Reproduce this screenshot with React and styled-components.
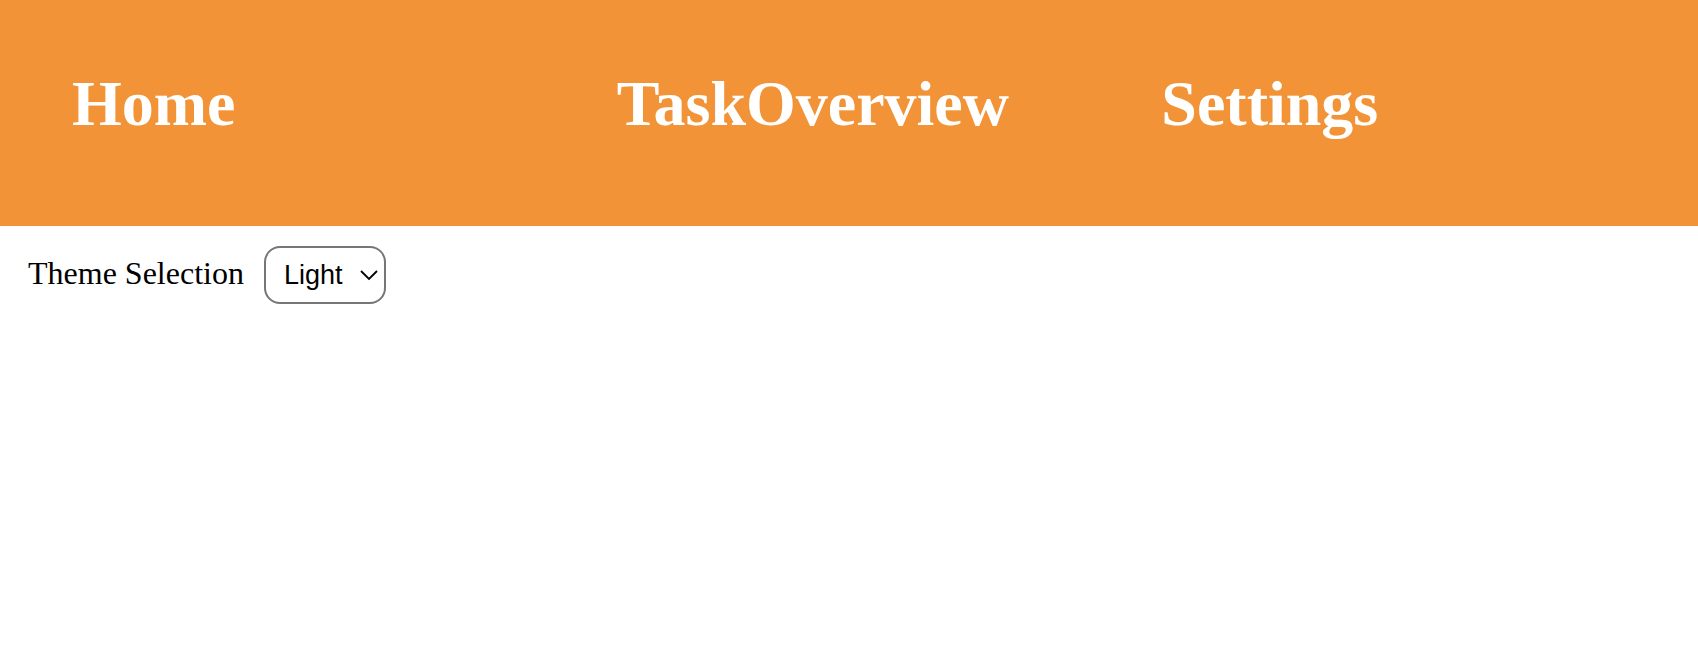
import React, { useState } from "react";
import styled, { createGlobalStyle } from "styled-components";

const GlobalStyle = createGlobalStyle`
  *, *::before, *::after { box-sizing: border-box; }
  body {
    margin: 0;
    background: #fff;
    color: #000;
    font-family: "Liberation Serif", "Times New Roman", serif;
    font-size: 32px;
  }
`;

const Header = styled.header`
  padding: 56px 32px 74px;
  background: #f19336;
`;

const Nav = styled.nav`
  display: grid;
  grid-template-columns: repeat(3, 1fr);
`;

const NavLink = styled.a`
  padding-left: 40px;
  color: #fff;
  font-size: 64px;
  line-height: 96px;
  font-weight: 700;
  text-decoration: none;
`;

const SettingsRow = styled.main`
  display: flex;
  align-items: baseline;
  gap: 20px;
  padding: 20px 28px;
`;

const Label = styled.label`
  line-height: 36px;
`;

const SelectBox = styled.span`
  display: grid;
  align-items: center;
  color: #000;

  & > * { grid-area: 1 / 1; }
`;

const Select = styled.select`
  appearance: none;
  height: 58px;
  margin: 0;
  padding: 0 41px 0 18px;
  border: 2px solid #767676;
  border-radius: 16px;
  background: #fff;
  color: inherit;
  font: 27px "Liberation Sans", Arial, sans-serif;
`;

const Chevron = styled.svg`
  justify-self: end;
  margin-right: 7px;
  pointer-events: none;
`;

const links = ["Home", "TaskOverview", "Settings"];

export default function App() {
  const [theme, setTheme] = useState("Light");
  return (
    <>
      <GlobalStyle />
      <Header>
        <Nav>
          {links.map((name) => (
            <NavLink key={name} href={`#${name}`}>{name}</NavLink>
          ))}
        </Nav>
      </Header>
      <SettingsRow>
        <Label htmlFor="theme">Theme Selection</Label>
        <SelectBox>
          <Select id="theme" value={theme} onChange={(e) => setTheme(e.target.value)}>
            <option>Light</option>
            <option>Dark</option>
          </Select>
          <Chevron width="20" height="12" viewBox="0 0 20 12" fill="none" stroke="currentColor" strokeWidth="1.8" aria-hidden="true">
            <path d="M2 2l8 8 8-8" />
          </Chevron>
        </SelectBox>
      </SettingsRow>
    </>
  );
}
